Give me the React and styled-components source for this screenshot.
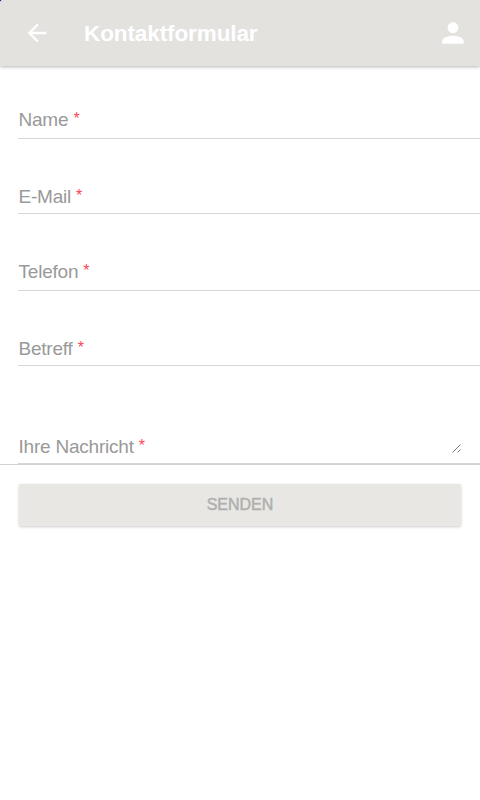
import React from "react";
import styled, { createGlobalStyle } from "styled-components";
import { MdArrowBack, MdPerson } from "react-icons/md";

const GlobalStyle = createGlobalStyle`
  * {
    box-sizing: border-box;
  }
  body {
    margin: 0;
    background-color: #fff;
    font-family: "Liberation Sans", Arial, sans-serif;
  }
`;

const Page = styled.div`
  min-height: 800px;
  overflow: hidden;
  background-color: #fff;
`;

const Header = styled.header`
  position: relative;
  display: flex;
  align-items: center;
  height: 66px;
  padding: 0 11px 0 23px;
  background-color: #e3e2df;
  box-shadow: 0 0 4px rgba(0, 0, 0, 0.45);
  color: #fff;
`;

const Corner = styled.span`
  position: absolute;
  top: 0;
  left: 0;
  width: 1px;
  height: 1px;
  background-color: #22206a;
  box-shadow: 0 0 2px 1px #cfcbe6;
`;

const Title = styled.h1`
  flex: 1;
  margin: 2px 0 0 33px;
  font-size: 22.5px;
  font-weight: 700;
  line-height: 28px;
  letter-spacing: -0.1px;
`;

const IconButton = styled.button`
  display: flex;
  padding: 0 0 1px;
  border: none;
  background: none;
  color: inherit;
`;

const Form = styled.form`
  display: flex;
  flex-direction: column;
`;

const Fields = styled.div`
  padding-left: 18px;
  border-bottom: 1px solid #d2d2d2;
`;

const Field = styled.div`
  display: flex;
  align-items: flex-end;
  justify-content: space-between;
  height: ${({ height }) => height};
  padding: 0 18px ${({ gap }) => gap} 0;
  border-bottom: 1px solid #d6d6d6;
`;

const Label = styled.label`
  padding-left: 0.5px;
  color: #999;
  font-size: 19px;
  line-height: 22px;
  letter-spacing: -0.22px;
`;

const Required = styled.span`
  position: relative;
  top: -2px;
  color: #fa4856;
  font-size: 16px;
  line-height: 1;
`;

const Grip = styled.svg`
  margin-bottom: 4px;
`;

const Button = styled.button`
  height: 42px;
  margin: 19px 19px 0;
  padding: 0;
  border: none;
  border-radius: 2px;
  background-color: #e8e7e4;
  box-shadow: 0 1px 3px rgba(0, 0, 0, 0.2);
  color: #b0b0ae;
  font-family: inherit;
  font-size: 16px;
  line-height: 42px;
  -webkit-text-stroke: 0.5px #b0b0ae;
`;

const fields = [
  { label: "Name", height: "73px", gap: "7px" },
  { label: "E-Mail", height: "75px", gap: "5px" },
  { label: "Telefon", height: "77px", gap: "7px" },
  { label: "Betreff", height: "75px", gap: "5px" },
  { label: "Ihre Nachricht", height: "98px", gap: "5px", multiline: true },
];

const ResizeGrip = () => (
  <Grip width="11" height="11" viewBox="0 0 11 11" stroke="#777" fill="none">
    <path d="M1.5 9.5l8-8M6.5 9.5l3-3" />
  </Grip>
);

const App = () => {
  return (
    <Page>
      <GlobalStyle />
      <Header>
        <Corner />
        <IconButton type="button" aria-label="Zurück">
          <MdArrowBack size={28} />
        </IconButton>
        <Title>Kontaktformular</Title>
        <IconButton type="button" aria-label="Profil">
          <MdPerson size={32} />
        </IconButton>
      </Header>
      <Form>
        <Fields>
          {fields.map(({ label, height, gap, multiline }) => (
            <Field key={label} height={height} gap={gap}>
              <Label>
                {label} <Required>*</Required>
              </Label>
              {multiline && <ResizeGrip />}
            </Field>
          ))}
        </Fields>
        <Button type="button">SENDEN</Button>
      </Form>
    </Page>
  );
};

export default App;
